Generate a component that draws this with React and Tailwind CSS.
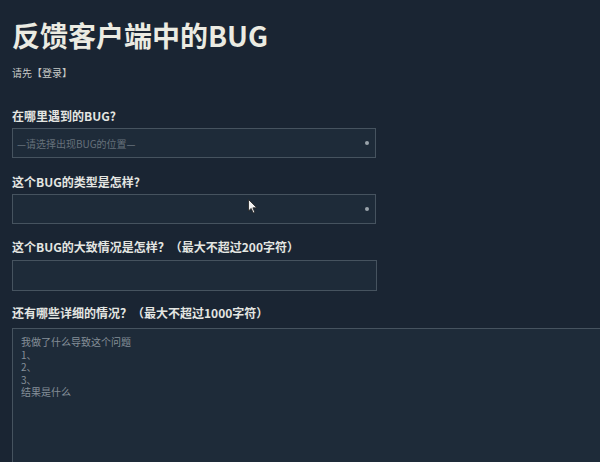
import React from 'react';

const field = 'bg-[#1e2b39] border border-[#46535f] text-[#8b96a0] text-[10px] outline-none';

function Label({ children, gap = 'mb-[4px]' }) {
  return (
    <div className={`text-[12px] font-bold text-[#e4e6e2] leading-[16px] ${gap}`}>{children}</div>
  );
}

function Select({ placeholder }) {
  return (
    <div className={`${field} relative h-[30px] w-[364px] flex items-center pl-[4px]`}>
      <span className="text-[#66717b]">{placeholder}</span>
      <span className="absolute right-[6px] top-[12px] w-[4px] h-[4px] rounded-full bg-[#9aa3ab]" />
    </div>
  );
}

const detailHint = '我做了什么导致这个问题\n1、\n2、\n3、\n结果是什么';

export default function App() {
  return (
    <div
      className="relative w-[600px] h-[462px] overflow-hidden bg-[#1a2533] pl-[12px] pt-[16px]"
      style={{ fontFamily: '"Noto Sans CJK SC", "Noto Sans", sans-serif' }}
    >
      <h1 className="text-[28px] font-bold text-[#ebebe2] leading-[38px]">反馈客户端中的BUG</h1>
      <div className="text-[10px] text-[#c9cbc8] mt-[12px] leading-[14px]">请先【登录】</div>

      <div className="mt-[28px]">
        <Label>在哪里遇到的BUG?</Label>
        <Select placeholder="—请选择出现BUG的位置—" />
      </div>

      <div className="mt-[16px]">
        <Label>这个BUG的类型是怎样?</Label>
        <Select placeholder="" />
      </div>

      <div className="mt-[15px]">
        <Label gap="mb-[5px]">这个BUG的大致情况是怎样？（最大不超过200字符）</Label>
        <div className={`${field} h-[31px] w-[365px]`} />
      </div>

      <div className="mt-[14px]">
        <Label gap="mb-[7px]">还有哪些详细的情况？（最大不超过1000字符）</Label>
        <div className={`${field} h-[150px] w-[600px] px-[8px] pt-[7px]`}>
          <div className="whitespace-pre-line leading-[12.5px] text-[#858f98]">{detailHint}</div>
        </div>
      </div>

      {/* mouse pointer */}
      <svg className="absolute left-[248px] top-[199px]" width="10" height="15" viewBox="0 0 10 15">
        <path d="M0.5 0.5 L0.5 12 L3.2 9.4 L5.2 14 L6.8 13.3 L4.9 8.8 L8.8 8.8 Z" fill="#f2f2f2" stroke="#222" strokeWidth="0.8" />
      </svg>
    </div>
  );
}
